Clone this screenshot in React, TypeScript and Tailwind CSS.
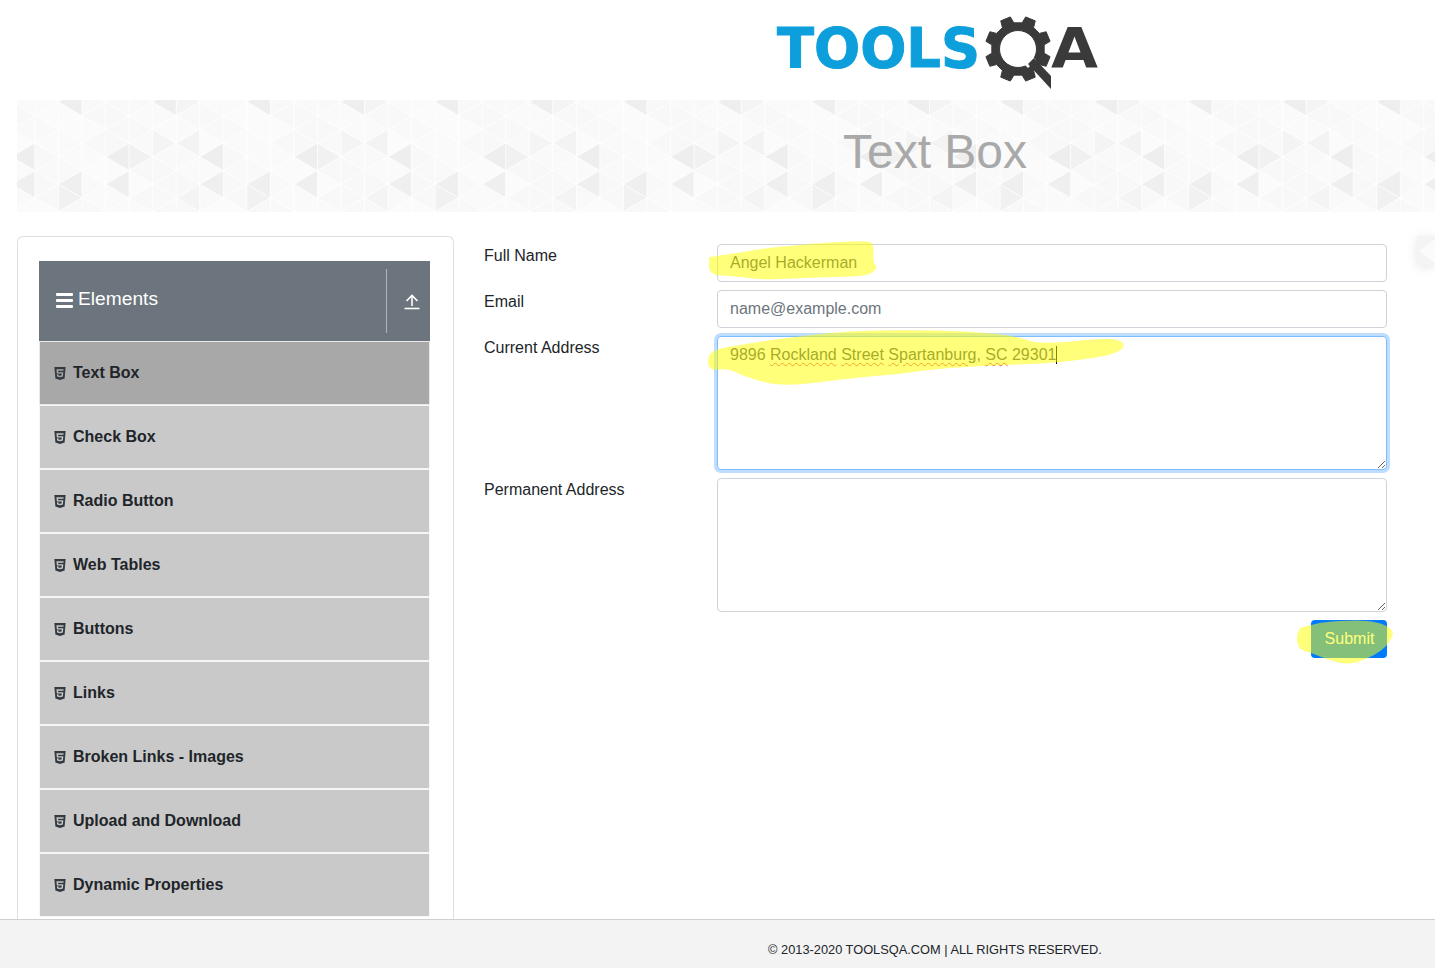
import type { ReactNode } from "react";
import { FaHtml5 } from "react-icons/fa";

const items = [
  "Text Box",
  "Check Box",
  "Radio Button",
  "Web Tables",
  "Buttons",
  "Links",
  "Broken Links - Images",
  "Upload and Download",
  "Dynamic Properties",
];

function gearPath(cx: number, cy: number, ro: number, ri: number, hole: number, teeth: number) {
  const pts: string[] = [];
  const step = (Math.PI * 2) / teeth;
  for (let i = 0; i < teeth; i++) {
    const a = i * step + step / 2;
    const seq: [number, number][] = [
      [ri, a - step * 0.3],
      [ro, a - step * 0.2],
      [ro, a + step * 0.2],
      [ri, a + step * 0.3],
    ];
    for (const [r, t] of seq) {
      pts.push(`${(cx + r * Math.cos(t)).toFixed(2)} ${(cy + r * Math.sin(t)).toFixed(2)}`);
    }
  }
  const outer = "M" + pts.join("L") + "Z";
  const inner = `M${cx + hole} ${cy}A${hole} ${hole} 0 1 0 ${cx - hole} ${cy}A${hole} ${hole} 0 1 0 ${cx + hole} ${cy}Z`;
  return outer + inner;
}

function Logo() {
  return (
    <svg width="322" height="92" viewBox="777 0 322 92" className="block overflow-visible">
      <text
        x="777"
        y="67"
        fontFamily="'DejaVu Sans', sans-serif"
        fontWeight="700"
        fontSize="56"
        fill="#0d9fdc"
        stroke="#0d9fdc"
        strokeWidth="1"
        textLength="203"
        lengthAdjust="spacingAndGlyphs"
      >
        TOOLS
      </text>
      <path d={gearPath(1018, 49, 33, 26.5, 18.5, 8)} fill="#3a3a3a" fillRule="evenodd" strokeLinejoin="round" stroke="#3a3a3a" strokeWidth="1" />
      <path d="M1024 64 L1032 56 L1036 60 L1028 68 Z" fill="#ffffff" />
      <path d="M1028 64 L1034 58 L1051 76 L1051 89 Z" fill="#3a3a3a" />
      <text
        x="1051"
        y="67"
        fontFamily="'DejaVu Sans', sans-serif"
        fontWeight="700"
        fontSize="56"
        fill="#3a3a3a"
        textLength="47"
        lengthAdjust="spacingAndGlyphs"
      >
        A
      </text>
    </svg>
  );
}

function Pattern() {
  const cw = 23.54;
  const ch = 27.4;
  const polys: { p: string; c: string }[] = [];
  const shade = (k: number, j: number, left: boolean) => {
    const m = ((k % 8) + 8) % 8;
    if (left && j === 2 && m % 4 === 0) return "#eeeeee";
    if (!left && j === 2 && m === 4) return "#f1f1f1";
    if (left && j === 3 && (m === 0 || m === 2 || m === 4)) return "#efefef";
    if (!left && j === 3 && m === 1) return "#f1f1f1";
    if (!left && j === 1 && m === 5) return "#f4f4f4";
    if (left && j === 1 && m === 7) return "#f3f3f3";
    if (left && j === 3 && m === 7) return "#f4f4f4";
    if (left && j === 0 && (m === 2 || m === 6)) return "#eeeeee";
    if (!left && j === 0 && m === 6) return "#f4f4f4";
    const h = (m * 7 + j * 13 + (left ? 5 : 0)) % 5;
    return ["#fafafa", "#f8f8f8", "#fbfbfb", "#f9f9f9", "#f8f8f8"][h];
  };
  for (let k = -1; k < 62; k++) {
    const x = 18 + cw * k;
    const odd = ((k % 2) + 2) % 2 === 1;
    const base = odd ? 2 : -11.7;
    for (let j = 0; j < 5; j++) {
      const y0 = base + ch * j;
      const y1 = y0 + ch;
      const ym = y0 + ch / 2;
      polys.push({ p: `${x},${y0} ${x},${y1} ${x - cw},${ym}`, c: shade(k, j, true) });
      polys.push({ p: `${x},${y0} ${x},${y1} ${x + cw},${ym}`, c: shade(k, j, false) });
    }
  }
  return (
    <svg className="absolute inset-0 w-full h-full blur-[0.4px]" aria-hidden="true">
      {polys.map((t, i) => (
        <polygon key={i} points={t.p} fill={t.c} stroke="#ffffff" strokeWidth="1" strokeOpacity="0.6" />
      ))}
    </svg>
  );
}

function smooth(points: [number, number][]) {
  const n = points.length;
  const mid = (a: [number, number], b: [number, number]) => [(a[0] + b[0]) / 2, (a[1] + b[1]) / 2];
  const start = mid(points[n - 1], points[0]);
  let d = `M${start[0]} ${start[1]}`;
  for (let i = 0; i < n; i++) {
    const m = mid(points[i], points[(i + 1) % n]);
    d += `Q${points[i][0]} ${points[i][1]} ${m[0]} ${m[1]}`;
  }
  return d + "Z";
}

const h1: [number, number][] = [
  [709, 258], [709, 257], [730, 254], [767, 248], [800, 245], [833, 242], [866, 241], [874, 243], [873, 263], [878, 267], [869, 276], [833, 277], [800, 278], [763, 280], [733, 276], [709, 275],
];
const h2: [number, number][] = [
  [708, 352], [730, 346], [800, 336], [850, 331], [900, 330], [967, 331], [1017, 336], [1040, 345], [1122, 336], [1125, 353], [1060, 363], [1000, 365], [933, 369], [900, 374], [850, 378], [783, 387], [745, 377], [728, 368], [708, 371],
];
const h3: [number, number][] = [
  [1297, 628], [1312, 625], [1323, 622], [1357, 620], [1377, 622], [1389, 627], [1394, 633], [1389, 643], [1381, 651], [1367, 659], [1347, 665], [1323, 658], [1312, 653], [1297, 649],
];

function Highlights() {
  return (
    <svg className="absolute inset-0 pointer-events-none" width="1435" height="968" aria-hidden="true">
      <g fill="#ffff00" fillOpacity="0.52">
        <path d={smooth(h1)} />
        <path d={smooth(h2)} />
        <path d={smooth(h3)} />
      </g>
    </svg>
  );
}

const inputClass =
  "block w-full h-[38px] border border-[#ced4da] rounded px-3 text-base text-[#495057] bg-white outline-none";

function Row({ label, children }: { label: string; children: ReactNode }) {
  return (
    <div className="flex mb-2">
      <label className="w-[233px] shrink-0 leading-6 text-[#212529] text-base">{label}</label>
      <div className="flex-1 min-w-0">{children}</div>
    </div>
  );
}

const wavy = "underline decoration-wavy decoration-[#e5484d] decoration-1 underline-offset-2";

export default function App() {
  return (
    <div className="relative h-[968px] w-[1435px] overflow-hidden flex flex-col bg-white font-['Liberation_Sans',Arial,sans-serif] text-[#212529]">
      <header className="h-[100px] shrink-0 pl-[777px]">
        <Logo />
      </header>
      <div className="relative ml-[17px] h-[112px] shrink-0 overflow-hidden bg-[#fafafa] flex items-center justify-center pl-[418px] pb-2">
        <Pattern />
        <h1 className="relative text-[48px] leading-[58px] text-[#a9a9a9]">Text Box</h1>
      </div>
      <main className="flex-1 min-h-0 flex pl-[17px] overflow-hidden">
        <aside className="w-[437px] shrink-0 mt-6 border border-[#dfdfdf] border-b-0 rounded-t-md pt-6 pl-[21px] pr-[23px]">
          <div className="h-20 bg-[#6c757d] flex items-center text-white">
            <div className="flex-1 flex items-center pl-[17px] pb-1">
              <svg width="17" height="15" viewBox="0 0 17 15" className="mt-[3px]" aria-hidden="true">
                <rect y="0" width="17" height="3" rx="1" fill="#fff" />
                <rect y="6" width="17" height="3" rx="1" fill="#fff" />
                <rect y="12" width="17" height="3" rx="1" fill="#fff" />
              </svg>
              <span className="ml-[5px] text-[19.2px] leading-6 text-white">Elements</span>
            </div>
            <div className="w-[44px] h-16 border-l border-[#adb5bd] flex items-center justify-center">
              <svg width="16" height="17" viewBox="0 0 16 17" className="ml-[6px]" fill="none" stroke="#fff" aria-hidden="true">
                <path d="M8 13 V2.5" strokeWidth="1.6" />
                <path d="M2.5 8 L8 2.5 L13.5 8" strokeWidth="1.6" />
                <path d="M0.5 15.5 H15.5" strokeWidth="1.6" />
              </svg>
            </div>
          </div>
          <ul>
            {items.map((t, i) => (
              <li
                key={t}
                className={
                  i === 0
                    ? "h-16 flex items-center border border-[#e9e9e9] bg-[#a8a8a8] pl-3"
                    : "h-16 flex items-center border border-[#f6f6f6] bg-[#c9c9c9] pl-3"
                }
              >
                <FaHtml5 className="text-[#343a40] w-4 h-[15px] mr-[5px] shrink-0" />
                <span className="text-base font-bold leading-6 text-[#212529]">{t}</span>
              </li>
            ))}
          </ul>
        </aside>
        <section className="w-[903px] ml-[30px] pt-8">
          <Row label="Full Name">
            <input className={inputClass} readOnly value="Angel Hackerman" />
          </Row>
          <Row label="Email">
            <input className={inputClass + " placeholder:text-[#6c757d]"} readOnly placeholder="name@example.com" />
          </Row>
          <Row label="Current Address">
            <div className="relative">
              <textarea
                readOnly
                spellCheck={false}
                value="9896 Rockland Street Spartanburg, SC 29301"
                className="block w-full h-[134px] border border-[#80bdff] rounded px-3 py-[6px] text-base leading-6 text-[#495057] bg-white outline-none shadow-[0_0_0_3px_rgba(0,123,255,0.25)]"
              />
              <div className="absolute left-[13px] top-[7px] leading-6 text-base text-transparent whitespace-pre pointer-events-none">
                {"9896 "}
                <span className={wavy}>Rockland</span>{" "}
                <span className={wavy}>Street</span>{" "}
                <span className={wavy}>Spartanburg</span>
                {", "}
                <span className={wavy}>SC</span>
                {" 29301"}
                <span className="inline-block w-px h-[18px] bg-black align-[-4px]" />
              </div>
            </div>
          </Row>
          <Row label="Permanent Address">
            <textarea
              readOnly
              spellCheck={false}
              className="block w-full h-[134px] border border-[#ced4da] rounded px-3 py-[6px] text-base bg-white outline-none"
            />
          </Row>
          <div className="flex justify-end w-[903px]">
            <button className="h-[38px] w-[76px] rounded bg-[#007bff] text-white text-base pl-px">Submit</button>
          </div>
        </section>
      </main>
      <footer className="h-[49px] shrink-0 border-t border-[#d0d0d0] bg-[#f3f3f3] flex items-end justify-center pl-[435px] pb-[10px]">
        <span className="text-[12.8px] leading-4 text-[#212529]">© 2013-2020 TOOLSQA.COM | ALL RIGHTS RESERVED.</span>
      </footer>
      <div className="absolute left-[1417px] top-[236px] w-[18px] h-[29px] bg-[#f4f4f4] shadow-[0_2px_12px_rgba(0,0,0,0.1)]">
        <svg width="18" height="29" aria-hidden="true">
          <polygon points="18,3 18,27 2,15" fill="#fbfbfb" />
        </svg>
      </div>
      <Highlights />
    </div>
  );
}
